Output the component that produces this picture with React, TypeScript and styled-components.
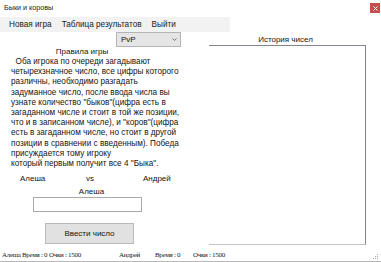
import React from "react";
import styled, { createGlobalStyle } from "styled-components";

const Global = createGlobalStyle`
  html, body { margin: 0; padding: 0; background: #ffffff; }
  body { font-family: "Liberation Sans", Arial, sans-serif; color: #141414; }
  * { box-sizing: border-box; }
`;

const Window = styled.div`
  width: 381px;
  height: 262px;
  display: flex;
  flex-direction: column;
  background: #ffffff;
  overflow: hidden;
`;

const TitleBar = styled.div`
  height: 17px;
  display: flex;
  align-items: flex-start;
  justify-content: space-between;
  padding: 3px 1px 0 4px;
`;

const Title = styled.span`
  font-size: 7.2px;
  line-height: 9px;
  color: #222;
`;

const CloseBtn = styled.div`
  width: 10px;
  height: 10px;
  background: #cc4b4b;
  display: flex;
  align-items: center;
  justify-content: center;
`;

const MenuBar = styled.div`
  width: 230px;
  height: 15px;
  display: flex;
  align-items: center;
  padding-left: 9px;
  gap: 10px;
  background: #f2f2f2;
`;

const MenuItem = styled.span`
  font-size: 8.2px;
  line-height: 15px;
  color: #1a1a1a;
`;

const Body = styled.div`
  flex: 1;
  display: flex;
  min-height: 0;
`;

const LeftCol = styled.div`
  width: 209px;
  display: flex;
  flex-direction: column;
`;

const Select = styled.div`
  margin-left: 116px;
  width: 65px;
  height: 15px;
  background: #e5e5e5;
  border: 1px solid #b4b4b4;
  display: flex;
  align-items: center;
  justify-content: space-between;
  padding: 0 3px 0 4px;
  font-size: 8px;
`;

const RulesTitle = styled.div`
  width: 164px;
  text-align: center;
  font-size: 8px;
  line-height: 10px;
`;

const Rules = styled.div`
  padding-left: 11px;
  font-size: 8.2px;
  line-height: 10.2px;
  white-space: pre;
  height: 117px;
`;

const PlayersRow = styled.div`
  display: flex;
  font-size: 8px;
  line-height: 10px;
  height: 13px;
`;

const PlayerName = styled.span<{ $w: number }>`
  width: ${(p) => p.$w}px;
`;

const CurrentPlayer = styled.div`
  width: 183px;
  text-align: center;
  font-size: 8px;
  line-height: 10px;
  height: 10px;
`;

const Input = styled.div`
  margin-left: 33px;
  width: 109px;
  height: 15px;
  border: 1px solid #a9a9a9;
  background: #fff;
`;

const Button = styled.div`
  margin: 11px 0 0 45px;
  width: 89px;
  height: 21px;
  background: #e1e1e1;
  border: 1px solid #b9b9b9;
  display: flex;
  align-items: center;
  justify-content: center;
  font-size: 8px;
`;

const RightCol = styled.div`
  width: 157px;
  display: flex;
  flex-direction: column;
  padding-top: 3px;
`;

const HistoryTitle = styled.div`
  text-align: center;
  font-size: 8px;
  line-height: 10px;
  padding-right: 4px;
`;

const HistoryList = styled.div`
  height: 200px;
  border-top: 1px solid #858592;
  border-right: 1px solid #858592;
  border-bottom: 1px solid #c4c4c8;
  background: #fff;
`;

const StatusBar = styled.div`
  height: 15px;
  display: flex;
  align-items: center;
  padding: 2px 0 0 2px;
  border-bottom: 1px solid #b8b8b8;
  font-family: "Liberation Serif", "Times New Roman", serif;
  font-size: 7px;
  letter-spacing: -0.3px;
  color: #1a1a1a;
  position: relative;
`;

const StatusLabel = styled.span<{ $w?: number }>`
  ${(p) => (p.$w ? `width: ${p.$w}px;` : "")}
  white-space: pre;
`;

const Grip = styled.svg`
  position: absolute;
  right: 2px;
  bottom: 1px;
`;

const rules = [
  "  Оба игрока по очереди загадывают",
  "четырехзначное число, все цифры которого",
  "различны, необходимо разгадать",
  "задуманное число, после ввода числа вы",
  "узнате количество \"быков\"(цифра есть в",
  "загаданном числе и стоит в той же позиции,",
  "что и в записанном числе), и \"коров\"(цифра",
  "есть в загаданном числе, но стоит в другой",
  "позиции в сравнении с введенным). Победа",
  "присуждается тому игроку",
  "который первым получит все 4 \"Быка\".",
].join("\n");

export default function App() {
  return (
    <>
      <Global />
      <Window>
        <TitleBar>
          <Title>Быки и коровы</Title>
          <CloseBtn>
            <svg width="5" height="5" viewBox="0 0 5 5">
              <path d="M0.5 0.5 L4.5 4.5 M4.5 0.5 L0.5 4.5" stroke="#fff" strokeWidth="1" />
            </svg>
          </CloseBtn>
        </TitleBar>
        <MenuBar>
          <MenuItem>Новая игра</MenuItem>
          <MenuItem>Таблица результатов</MenuItem>
          <MenuItem>Выйти</MenuItem>
        </MenuBar>
        <Body>
          <LeftCol>
            <Select>
              <span>PvP</span>
              <svg width="5" height="3" viewBox="0 0 5 3">
                <path d="M0.5 0.5 L2.5 2.5 L4.5 0.5" stroke="#555" strokeWidth="0.8" fill="none" />
              </svg>
            </Select>
            <RulesTitle>Правила игры</RulesTitle>
            <Rules>{rules}</Rules>
            <PlayersRow>
              <PlayerName $w={20} />
              <PlayerName $w={66}>Алеша</PlayerName>
              <PlayerName $w={57}>vs</PlayerName>
              <PlayerName $w={40}>Андрей</PlayerName>
            </PlayersRow>
            <CurrentPlayer>Алеша</CurrentPlayer>
            <Input />
            <Button>Ввести число</Button>
          </LeftCol>
          <RightCol>
            <HistoryTitle>История чисел</HistoryTitle>
            <HistoryList />
          </RightCol>
        </Body>
        <StatusBar>
          <StatusLabel $w={20}>Алеша</StatusLabel>
          <StatusLabel $w={27}>Время : 0</StatusLabel>
          <StatusLabel $w={70}>Очки : 1500</StatusLabel>
          <StatusLabel $w={36}>Андрей</StatusLabel>
          <StatusLabel $w={38}>Время : 0</StatusLabel>
          <StatusLabel>Очки : 1500</StatusLabel>
          <Grip width="6" height="6" viewBox="0 0 6 6">
            <rect x="4" y="0" width="1" height="1" fill="#aaa" />
            <rect x="2" y="2" width="1" height="1" fill="#aaa" />
            <rect x="4" y="2" width="1" height="1" fill="#aaa" />
            <rect x="0" y="4" width="1" height="1" fill="#aaa" />
            <rect x="2" y="4" width="1" height="1" fill="#aaa" />
            <rect x="4" y="4" width="1" height="1" fill="#aaa" />
          </Grip>
        </StatusBar>
      </Window>
    </>
  );
}
